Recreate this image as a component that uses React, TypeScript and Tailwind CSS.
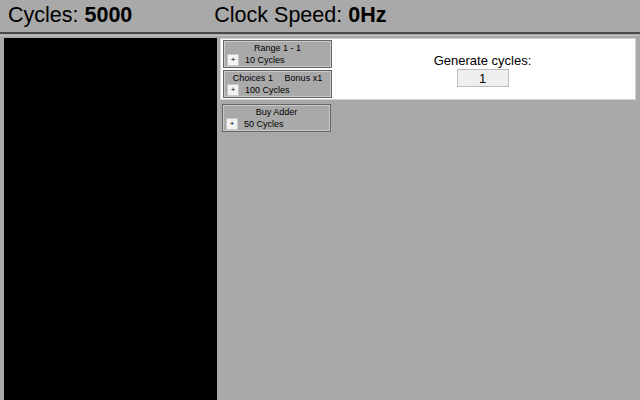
import React from "react";

function UpgradeBox({ title, cost }: { title: React.ReactNode; cost: string }) {
  return (
    <div className="flex h-[28px] w-[109px] flex-col border border-[#666] bg-[#a9a9a9] shadow-[inset_1px_1px_0_#c9c9c9,inset_-1px_-1px_0_#c9c9c9] px-[3px] pt-[2px] text-[9px] leading-[10px] text-black">
      <div className="flex justify-around">{title}</div>
      <div className="mt-[1px] flex items-center gap-[6px]">
        <button className="flex h-[12px] w-[12px] items-center justify-center border border-[#c8c8c8] bg-[#f3f3f3] text-[8px] leading-none">
          +
        </button>
        <span>{cost}</span>
      </div>
    </div>
  );
}

export default function App() {
  return (
    <div
      className="flex h-[400px] w-[640px] flex-col overflow-hidden bg-[#a9a9a9] text-black"
      style={{ fontFamily: '"Liberation Sans", Arial, sans-serif' }}
    >
      {/* Header */}
      <header className="flex h-[34px] shrink-0 items-center border-b-2 border-[#4a4a4a] px-2 pb-[2px] text-[21.5px]">
        <span>
          Cycles: <b>5000</b>
        </span>
        <span className="ml-[82px]">
          Clock Speed: <b>0Hz</b>
        </span>
      </header>

      <div className="mt-px flex flex-1 gap-[3px] border-t border-[#c2c2c2] pl-1 pr-1 pt-[2px]">
        {/* Canvas */}
        <div className="w-[213px] shrink-0 bg-black" />

        <div className="flex flex-1 flex-col">
          <div className="flex h-[62px] border border-[#d2d2d2] bg-white px-[2px] pt-[1px]">
            <div className="flex flex-col gap-[2px]">
              <UpgradeBox title={<span>Range 1 - 1</span>} cost="10 Cycles" />
              <UpgradeBox
                title={
                  <>
                    <span>Choices 1</span>
                    <span>Bonus x1</span>
                  </>
                }
                cost="100 Cycles"
              />
            </div>
            <div className="flex flex-1 flex-col items-center pt-[13px] text-[13px] leading-[15px]">
              <span>Generate cycles:</span>
              <div className="mt-[1px] flex h-[18px] w-[52px] items-center justify-center border border-[#bdbdbd] bg-[#efefef]">
                1
              </div>
            </div>
          </div>
          <div className="ml-[2px] mt-1">
            <UpgradeBox title={<span>Buy Adder</span>} cost="50 Cycles" />
          </div>
        </div>
      </div>
    </div>
  );
}
